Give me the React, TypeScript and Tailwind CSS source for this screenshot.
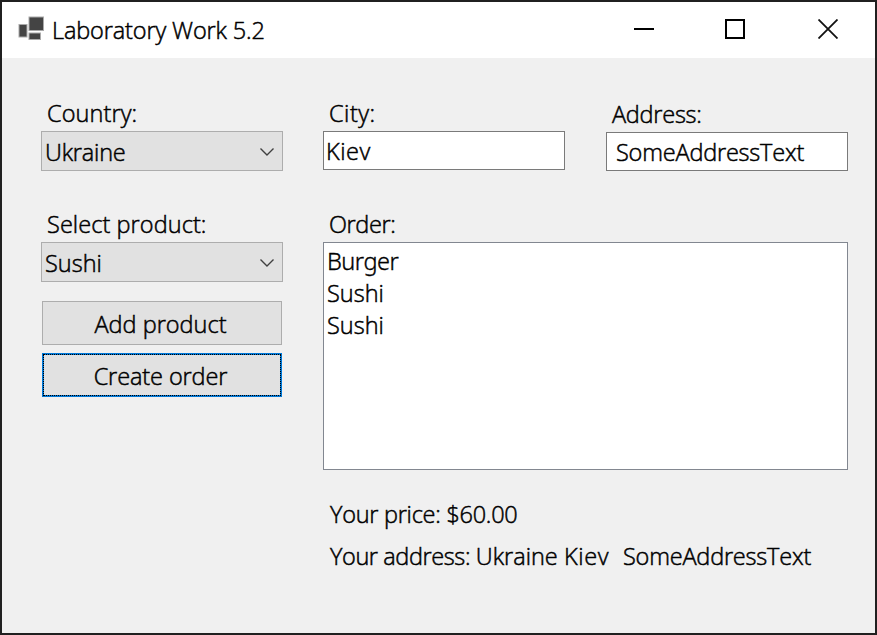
import React from "react";

type TextProps = { children: React.ReactNode; className?: string };

function Text({ children, className = "" }: TextProps) {
  return <span className={`block h-8 w-fit whitespace-pre leading-8 ${className}`}>{children}</span>;
}

function Combo({ children }: { children: React.ReactNode }) {
  return (
    <div className="flex h-10 w-[242px] items-start justify-between border border-[#adadad] bg-[#e1e1e1] pt-1 pr-[8px] pl-[3px]">
      {children}
      <svg className="mt-3" width="14" height="8" viewBox="0 0 14 8" fill="none" stroke="#404040" strokeWidth="1.4">
        <path d="M.5.5 7 7l6.5-6.5" />
      </svg>
    </div>
  );
}

function TitleBar() {
  return (
    <header className="flex h-14 shrink-0 bg-white">
      <svg className="mt-3.5 ml-4" width="27" height="25" viewBox="0 0 27 25" fill="#444" stroke="#aaa" strokeWidth="1">
        <rect x="1" y="8.5" width="8" height="12.5" />
        <rect x="11" y="1" width="14.5" height="13.5" />
        <rect x="11" y="17" width="11.5" height="6.5" />
      </svg>
      <Text className="mt-3 ml-[7px] tracking-[-0.13px]">Laboratory Work 5.2</Text>
      <div className="mt-[17px] mr-[37px] ml-auto flex">
        <svg width="20" height="20" viewBox="0 0 20 20" stroke="#000" strokeWidth="2">
          <path d="M0 10h20" />
        </svg>
        <svg className="ml-[71px]" width="20" height="20" viewBox="0 0 20 20" fill="none" stroke="#000" strokeWidth="2">
          <rect x="1" y="1" width="18" height="18" />
        </svg>
        <svg className="ml-[73px]" width="20" height="20" viewBox="0 0 20 20" stroke="#111" strokeWidth="1.8">
          <path d="m.5.5 19 19M19.5.5l-19 19" />
        </svg>
      </div>
    </header>
  );
}

export default function App() {
  return (
    <div className="flex h-[635px] w-[877px] flex-col overflow-hidden border-2 border-[#202020] bg-[#f0f0f0] font-['Open_Sans',sans-serif] text-[23.5px] font-light text-black [-webkit-text-stroke:0.5px_black]">
      <TitleBar />
      <main className="pl-[39px]">
        <section className="flex h-[145px] items-start pt-[39px]">
          <div className="w-[282px]">
            <Text className="mb-0.5 ml-1.5 tracking-[0.1px]">Country:</Text>
            <Combo>
              <Text className="tracking-[-0.2px]">Ukraine</Text>
            </Combo>
          </div>
          <div className="w-[283px]">
            <Text className="mb-0.5 ml-1.5 tracking-[0.5px]">City:</Text>
            <div className="h-[39px] w-[242px] border border-[#7a7a7a] bg-white pt-[3px] pl-0.5">
              <Text className="tracking-[0.5px]">Kiev</Text>
            </div>
          </div>
          <div className="pt-px">
            <Text className="mb-0.5 ml-1.5 tracking-[-0.25px]">Address:</Text>
            <div className="h-[39px] w-[242px] border border-[#7a7a7a] bg-white pt-[3px] pl-[9px]">
              <Text className="tracking-[-0.2px]">SomeAddressText</Text>
            </div>
          </div>
        </section>
        <section className="flex items-start pt-[5px]">
          <div className="w-[282px]">
            <Text className="mb-0.5 ml-1.5 tracking-[0.07px]">Select product:</Text>
            <Combo>
              <Text>Sushi</Text>
            </Combo>
            <button className="mt-[19px] ml-px flex h-11 w-60 justify-center border border-[#adadad] bg-[#e1e1e1] pt-1.5 pr-[3px]">
              <Text>Add product</Text>
            </button>
            <button className="mt-2 ml-px h-11 w-60 border border-[#0078d7] bg-[#0078d7]">
              <span className="flex h-[42px] justify-center border border-dotted border-black bg-[#e1e1e1] bg-clip-padding pt-[5px] pr-[3px]">
                <Text className="tracking-[-0.1px]">Create order</Text>
              </span>
            </button>
          </div>
          <div>
            <Text className="mb-0.5 ml-1.5 tracking-[-0.4px]">Order:</Text>
            <div className="h-[228px] w-[525px] border border-[#828790] bg-white pt-0.5 pl-[3px]">
              <Text className="font-['Noto_Sans',sans-serif] tracking-[-0.5px] [-webkit-text-stroke:0.35px_black]">Burger</Text>
              <Text>Sushi</Text>
              <Text>Sushi</Text>
            </div>
            <Text className="mt-7 ml-[7px] tracking-[-0.26px]">Your price: $60.00</Text>
            <Text className="mt-2.5 ml-[7px]">
              <span className="tracking-[-0.4px]">{"Your address: "}</span>
              {"Ukraine "}
              <span className="tracking-[0.7px]">{"Kiev  "}</span>
              <span className="tracking-[-0.2px]">SomeAddressText</span>
            </Text>
          </div>
        </section>
      </main>
    </div>
  );
}
